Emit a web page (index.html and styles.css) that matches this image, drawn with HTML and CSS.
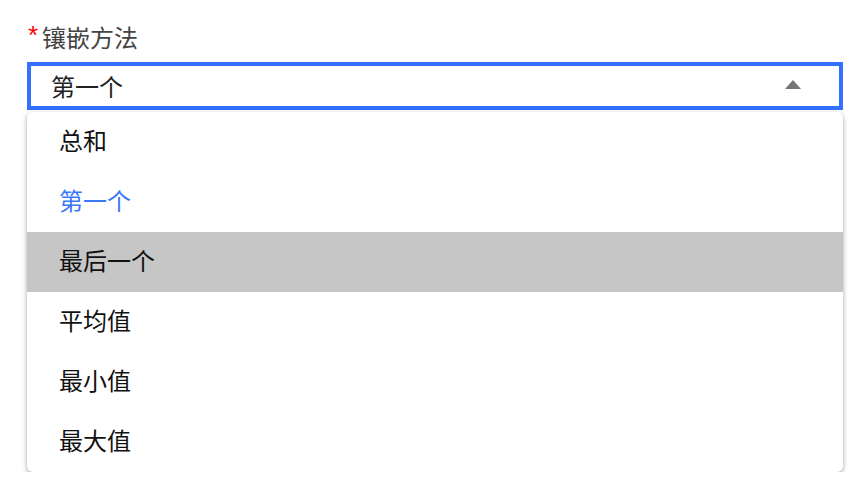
FILE: index.html
```html
<!DOCTYPE html>
<html lang="zh">
<head>
<meta charset="utf-8">
<link rel="stylesheet" href="styles.css">
</head>
<body>
<div class="field">
  <div class="label"><span class="req">*</span><span>镶嵌方法</span></div>
  <div class="select">
    <span class="value">第一个</span>
    <svg class="arrow" width="16" height="9" viewBox="0 0 16 9"><path d="M0 9 L8 0 L16 9 Z" fill="#757575"/></svg>
  </div>
  <ul class="menu">
    <li class="item">总和</li>
    <li class="item selected">第一个</li>
    <li class="item hover">最后一个</li>
    <li class="item">平均值</li>
    <li class="item">最小值</li>
    <li class="item">最大值</li>
  </ul>
</div>
</body>
</html>
```
FILE: styles.css
```css
html, body {
  margin: 0;
  padding: 0;
  background: #fff;
}
body {
  font-family: "Noto Sans CJK SC", "Noto Sans", sans-serif;
}
.field {
  padding: 21px 24px 0 27px;
  width: 816px;
}
.label {
  display: flex;
  align-items: center;
  height: 32px;
  font-size: 24px;
  line-height: 32px;
  color: #444;
}
.req {
  color: #f00;
  font-size: 26px;
  font-family: "Liberation Sans", sans-serif;
  width: 14px;
  margin-left: 1px;
  position: relative;
  top: -2px;
}
.select {
  margin-top: 9px;
  box-sizing: border-box;
  height: 48px;
  border: 4px solid #3370ff;
  display: flex;
  align-items: center;
  padding: 0 38px 0 20px;
}
.value {
  flex: 1;
  font-size: 24px;
  color: #222;
  line-height: 32px;
}
.arrow {
  display: block;
  margin-top: -4px;
}
.menu {
  list-style: none;
  margin: 2px 0 0;
  padding: 0;
  background: #fff;
  border-radius: 6px;
  box-shadow: 0 2px 4px rgba(0,0,0,0.3), 0 1px 8px rgba(0,0,0,0.08);
  overflow: hidden;
}
.item {
  box-sizing: border-box;
  height: 60px;
  display: flex;
  align-items: center;
  padding: 0 0 5px 32px;
  font-size: 24px;
  color: #111;
}
.item.selected {
  color: #3b78f6;
}
.item.hover {
  background: #c6c6c6;
}
```
